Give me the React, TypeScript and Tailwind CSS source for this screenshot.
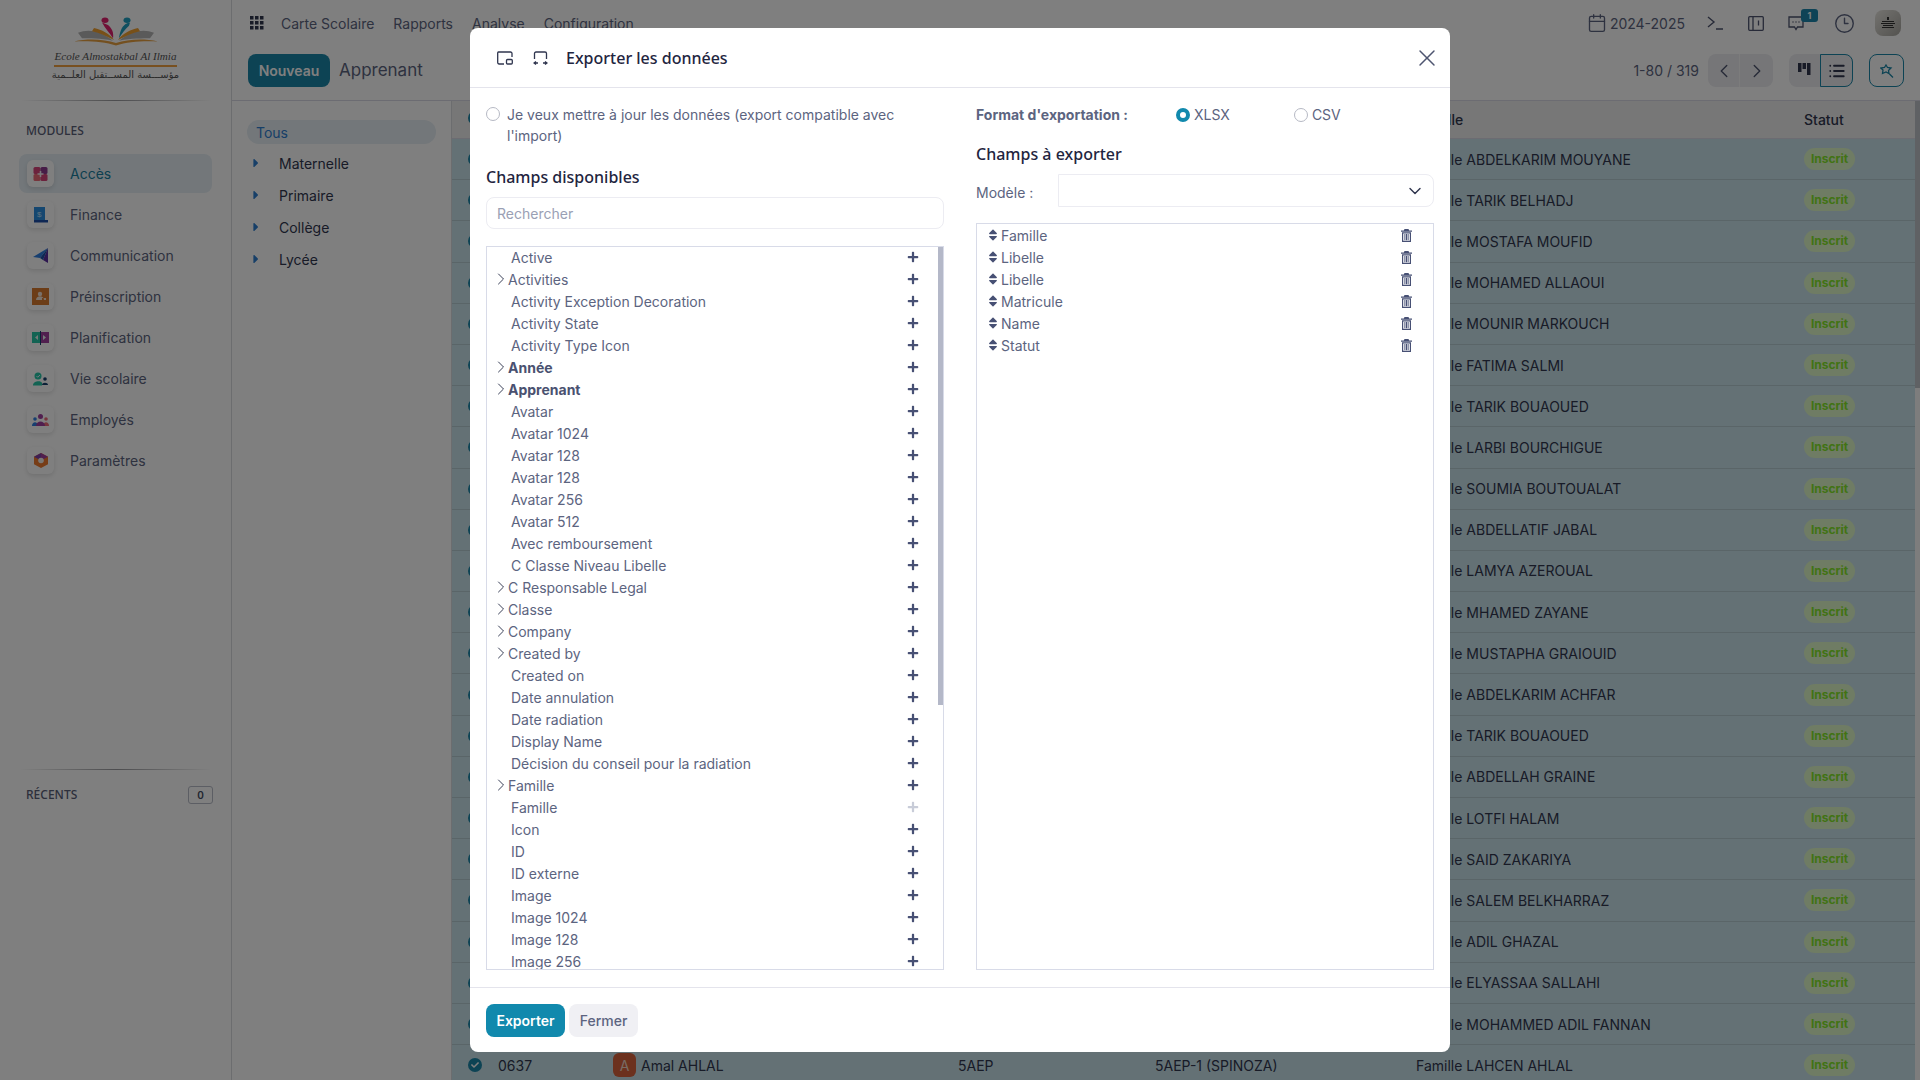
import { ChevronDown, ChevronLeft, ChevronRight, Clock3, X, List, Calendar } from "lucide-react";
import { FaPlus, FaSort, FaCaretRight, FaCheck } from "react-icons/fa";

const topMenu = ["Carte Scolaire", "Rapports", "Analyse", "Configuration"];
const levels = ["Maternelle", "Primaire", "Collège", "Lycée"];

const families = [
  "ABDELKARIM MOUYANE", "TARIK BELHADJ", "MOSTAFA MOUFID", "MOHAMED ALLAOUI", "MOUNIR MARKOUCH",
  "FATIMA SALMI", "TARIK BOUAOUED", "LARBI BOURCHIGUE", "SOUMIA BOUTOUALAT", "ABDELLATIF JABAL",
  "LAMYA AZEROUAL", "MHAMED ZAYANE", "MUSTAPHA GRAIOUID", "ABDELKARIM ACHFAR", "TARIK BOUAOUED",
  "ABDELLAH GRAINE", "LOTFI HALAM", "SAID ZAKARIYA", "SALEM BELKHARRAZ", "ADIL GHAZAL",
  "ELYASSAA SALLAHI", "MOHAMMED ADIL FANNAN", "LAHCEN AHLAL",
];

const fields: { label: string; expand?: boolean; bold?: boolean; muted?: boolean }[] = [
  { label: "Active" },
  { label: "Activities", expand: true },
  { label: "Activity Exception Decoration" },
  { label: "Activity State" },
  { label: "Activity Type Icon" },
  { label: "Année", expand: true, bold: true },
  { label: "Apprenant", expand: true, bold: true },
  { label: "Avatar" },
  { label: "Avatar 1024" },
  { label: "Avatar 128" },
  { label: "Avatar 128" },
  { label: "Avatar 256" },
  { label: "Avatar 512" },
  { label: "Avec remboursement" },
  { label: "C Classe Niveau Libelle" },
  { label: "C Responsable Legal", expand: true },
  { label: "Classe", expand: true },
  { label: "Company", expand: true },
  { label: "Created by", expand: true },
  { label: "Created on" },
  { label: "Date annulation" },
  { label: "Date radiation" },
  { label: "Display Name" },
  { label: "Décision du conseil pour la radiation" },
  { label: "Famille", expand: true },
  { label: "Famille", muted: true },
  { label: "Icon" },
  { label: "ID" },
  { label: "ID externe" },
  { label: "Image" },
  { label: "Image 1024" },
  { label: "Image 128" },
  { label: "Image 256" },
];

const exportFields = ["Famille", "Libelle", "Libelle", "Matricule", "Name", "Statut"];

// module icons from the sidebar, redrawn by hand
const moduleIcons = [
  <svg key="a" width="17" height="16" viewBox="0 0 16 16">
    <rect x="1" y="1" width="7" height="7" rx="1.5" fill="#d8447a" />
    <rect x="8" y="1" width="7" height="7" rx="1.5" fill="#8e3b8f" />
    <rect x="1" y="8" width="7" height="7" rx="1.5" fill="#ee6a78" />
    <rect x="8" y="8" width="7" height="7" rx="1.5" fill="#d8447a" />
    <path d="M8 5v6M5 8h6" stroke="#f6eef2" strokeWidth="1.6" />
  </svg>,
  <svg key="b" width="16" height="16" viewBox="0 0 16 16">
    <rect x="1" y="0" width="11" height="13" fill="#2a8fe0" />
    <path d="M1 13h14v2.5H1z" fill="#1d4fa8" />
    <text x="4" y="10" fontSize="8" fill="#bfe3ff" fontFamily="Liberation Sans, sans-serif">$</text>
  </svg>,
  <svg key="c" width="16" height="16" viewBox="0 0 16 16">
    <path d="M15 0v15l-5-3z" fill="#5a2ea0" />
    <path d="M15 0 0 9l7 1z" fill="#2f7fe0" />
    <path d="M15 0 7 10l3 2z" fill="#1d4fa8" />
  </svg>,
  <svg key="d" width="17" height="17" viewBox="0 0 17 17">
    <rect width="17" height="17" fill="#d97a2e" />
    <circle cx="8" cy="6" r="2.2" fill="#f4e4d4" />
    <path d="M4 12c0-5 8-5 8 0zM10 12h4v-2h-4z" fill="#f4e4d4" />
  </svg>,
  <svg key="e" width="17" height="14" viewBox="0 0 17 14">
    <rect y="1" width="8" height="11" fill="#26c6a6" />
    <rect x="9" y="1" width="8" height="11" fill="#a03f9f" />
    <rect x="8" y="0" width="1" height="14" fill="#17406f" />
    <path d="M6 4v5L3 6.500zM11 4v5l3-2.500z" fill="#e8f5f2" />
  </svg>,
  <svg key="f" width="15" height="14" viewBox="0 0 15 14">
    <circle cx="5" cy="4" r="3.500" fill="#26c6a6" />
    <path d="m3.500 4 1.200 1.200L7 3" stroke="#eef" strokeWidth="1" fill="none" />
    <path d="M0 13c0-4 8-5 9-2v2.500H0z" fill="#26c6a6" />
    <circle cx="12" cy="7" r="1.800" fill="#17406f" />
    <path d="M9 13c0-3 6-3 6 0z" fill="#17406f" />
  </svg>,
  <svg key="g" width="17" height="12" viewBox="0 0 17 12">
    <circle cx="8.500" cy="2.500" r="2.500" fill="#a03f9f" />
    <circle cx="3" cy="5" r="1.800" fill="#2f7fe0" />
    <circle cx="14" cy="5" r="1.800" fill="#ee6a78" />
    <path d="M0 12c0-5 6-5 6 0z" fill="#2f7fe0" />
    <path d="M11 12c0-5 6-5 6 0z" fill="#ee6a78" />
    <path d="M4 12c0-6 9-6 9 0z" fill="#a03f9f" />
  </svg>,
  <svg key="h" width="14" height="15" viewBox="0 0 14 15">
    <path d="M7 0l7 3.700v7.600L7 15l-7-3.700V3.700z" fill="#ee7a2e" />
    <path d="M7 0l7 3.700L7 7.500z" fill="#a03f9f" />
    <path d="M0 3.700 7 0v7.500z" fill="#7f3fa8" />
    <circle cx="7" cy="7.500" r="2.800" fill="#f5f0ea" />
  </svg>,
];

const modules = ["Accès", "Finance", "Communication", "Préinscription", "Planification", "Vie scolaire", "Employés", "Paramètres"];

function TrashIcon() {
  return (
    <svg width="11" height="13" viewBox="0 0 11 13" fill="#475074">
      <path d="M3.500 0h4l.7 1.500H11v1.200H0V1.500h2.800z" />
      <path d="M1 3.300h9V13H1zM2.200 4.500v7.300h6.600V4.500z" fillRule="evenodd" />
      <path d="M3.400 5h1v6.300h-1zM5 5h1v6.300H5zM6.600 5h1v6.300h-1z" />
    </svg>
  );
}

function Logo() {
  return (
    <div className="flex flex-col items-center">
      <svg width="84" height="30" viewBox="0 0 84 38" preserveAspectRatio="none">
        <path d="M4 20c10-5 22-3 35 10-12-3-25-3-31-3z" fill="#b4b4b4" />
        <path d="M80 20c-10-5-22-3-35 10 12-3 25-3 31-3z" fill="#b4b4b4" />
        <path d="M20 14c8 2 15 7 20 15-8-5-14-9-22-11zM64 14c-8 2-15 7-20 15 8-5 14-9 22-11z" fill="#f0a030" />
        <path d="M0 31c14-4 30-3 42 2 12-5 28-6 42-2-14-1-30 0-42 5-12-5-28-6-42-5z" fill="#e8a040" />
        <circle cx="31" cy="4" r="3.500" fill="#e0206f" />
        <path d="M28 7c3 8 8 13 11 20 1-7-1-13-5-17z" fill="#e0206f" />
        <circle cx="53" cy="4" r="3.500" fill="#1f9fc0" />
        <path d="M56 7c-4 1-9 3-11 20 3-6 6-12 10-16z" fill="#1f9fc0" />
      </svg>
      <div className="mt-[2px] h-[14px] whitespace-nowrap font-['Liberation_Serif',serif] text-[11.100px] leading-[14px] text-[#555] italic">
        Ecole Almostakbal Al Ilmia
      </div>
      <div className="mt-[2px] h-[2px] w-[123px] bg-[#f0a040]" />
      <div className="mt-[1px] h-[14px] whitespace-nowrap font-['DejaVu_Sans',sans-serif] text-[10px] leading-[14px] text-[#555]" dir="rtl">
        مؤســـسة المســتقبل العلــمية
      </div>
    </div>
  );
}

function Sidebar() {
  return (
    <aside className="flex h-full w-[232px] shrink-0 flex-col border-r border-[#d8dade] bg-white">
      <div className="flex h-[100px] flex-col items-center pt-[17px]">
        <Logo />
      </div>
      <div className="mx-[20px] h-px w-[192px] bg-gradient-to-r from-transparent via-[#9a9a9e] to-transparent" />
      <div className="mt-[21px] pl-[26px] font-['Noto_Sans',sans-serif] text-[12px] leading-[18px] font-medium text-[#5a6078]">MODULES</div>
      <nav className="mt-[13px] flex flex-col">
        {modules.map((m, i) => (
          <div
            key={m}
            className={`mx-[19px] flex items-center rounded-lg pl-[8px] ${i === 0 ? "my-px h-[39px] bg-[#e6eff5]" : "h-[41px]"}`}
          >
            <span className="flex h-[27px] w-[27px] items-center justify-center rounded-md bg-white shadow-[0_2px_5px_rgba(0,0,0,0.12)]">
              {moduleIcons[i]}
            </span>
            <span className={`ml-[16px] text-[14px] ${i === 0 ? "text-[#1a7f9f]" : "text-[#5c6480]"}`}>{m}</span>
          </div>
        ))}
      </nav>
      <div className="mx-[20px] mt-[288px] h-px w-[192px] bg-gradient-to-r from-transparent via-[#9a9a9e] to-transparent" />
      <div className="mt-[16px] flex items-center justify-between pr-[18px] pl-[26px]">
        <span className="font-['Noto_Sans',sans-serif] text-[12px] font-medium text-[#5a6078]">RÉCENTS</span>
        <span className="flex h-[18px] w-[25px] items-center justify-center rounded-[3px] border border-[#b8bcc8] text-[10px] font-semibold text-[#444a60]">0</span>
      </div>
    </aside>
  );
}

function TopBar() {
  return (
    <div className="flex h-[46px] items-center pr-[19px] pl-[18px]">
      <svg width="14" height="14" viewBox="0 0 14 14" fill="#30364f">
        {[0, 5, 10].map((y) => [0, 5, 10].map((x) => <rect key={`${x}-${y}`} x={x} y={y} width="3.500" height="3.500" />))}
      </svg>
      <div className="ml-[17px] flex gap-[19px] text-[14px] text-[#5c6480]">
        {topMenu.map((t) => (
          <span key={t}>{t}</span>
        ))}
      </div>
      <div className="ml-auto flex items-center text-[#5c6480]">
        <Calendar size={20} strokeWidth={1.6} />
        <span className="ml-[3px] text-[14px]">2024-2025</span>
        <svg className="ml-[22px]" width="16" height="14" viewBox="0 0 16 14" fill="none" stroke="#4e5570" strokeWidth="1.400">
          <path d="m1 1 6 5-6 5M9 13h7" />
        </svg>
        <svg className="ml-[25px]" width="16" height="15" viewBox="0 0 16 15" fill="none" stroke="#4e5570" strokeWidth="1.300">
          <rect x="0.700" y="0.700" width="14.600" height="13.600" rx="1" />
          <path d="M5 1v13M10.500 4.500v5" />
        </svg>
        <span className="relative ml-[24px]">
          <svg width="16" height="16" viewBox="0 0 16 16" fill="none" stroke="#4e5570" strokeWidth="1.300">
            <path d="M1 2h14v10H9.500L8 14.500 6.500 12H1z" />
            <path d="M4.500 7h1M7.500 7h1M10.500 7h1" />
          </svg>
          <span className="absolute top-[-6px] left-[13px] flex h-[13px] w-[17px] items-center justify-center rounded-[3px] bg-[#1c87ad] text-[9px] font-bold text-white">1</span>
        </span>
        <Clock3 className="ml-[30px]" size={21} strokeWidth={1.6} />
        <span className="ml-[20px] flex h-[26px] w-[26px] items-center justify-center rounded-lg bg-gradient-to-br from-[#e8e6e0] to-[#a8a6a0]">
          <svg width="16" height="13" viewBox="0 0 16 13" fill="#333">
            <path d="M7 0h2v3H7zM2 4h12v1H2zM1 6h14v1H1zM3 8h10v1H3zM2 10h12v1H2z" />
          </svg>
        </span>
      </div>
    </div>
  );
}

function ControlBar() {
  return (
    <div className="flex h-[55px] items-start border-b border-[#d8d8e4] pt-[8px] pr-[16px] pl-[16px]">
      <button className="flex h-[33px] w-[82px] items-center justify-center rounded-lg bg-[#1a86a8] text-[14px] font-semibold text-white">Nouveau</button>
      <span className="ml-[9px] text-[17px] leading-[32px] text-[#5c6480]">Apprenant</span>
      <div className="ml-auto flex items-center">
        <span className="text-[14px] text-[#5c6480]">1-80 / 319</span>
        <div className="ml-[9px] flex h-[33px] w-[65px] rounded-lg bg-[#ececf0] text-[#4e5570]">
          <span className="flex w-[32px] items-center justify-center border-r border-[#f8f8f8]"><ChevronLeft size={22} strokeWidth={1.5} /></span>
          <span className="flex w-[33px] items-center justify-center"><ChevronRight size={22} strokeWidth={1.5} /></span>
        </div>
        <div className="ml-[16px] flex h-[33px] w-[64px] rounded-lg bg-[#ececf0]">
          <span className="flex w-[31px] items-start justify-center pt-[9px]">
            <svg width="13" height="12" viewBox="0 0 13 12" fill="#30364f">
              <path d="M0 0h3.500v9H0zM4.500 0h3.500v6H4.500zM9 0h3.500v12H9z" />
            </svg>
          </span>
          <span className="flex w-[33px] items-center justify-center rounded-r-lg border border-[#1a86a8] text-[#30364f]"><List size={18} strokeWidth={2.400} /></span>
        </div>
        <span className="ml-[16px] flex h-[33px] w-[35px] items-center justify-center rounded-lg border border-[#1a86a8]">
          <svg width="14" height="14" viewBox="0 0 14 14" fill="none" stroke="#1a86a8" strokeWidth="1.300">
            <path d="M6 1 7.500 3.500 11 4 8.500 6.500 9 9.500 6 8 2.500 9.500 3 6 .7 4 4.500 3.500zM9.500 10l3.500 3.500" />
          </svg>
        </span>
      </div>
    </div>
  );
}

function Filters() {
  return (
    <div className="h-full w-[220px] shrink-0 border-r border-[#d8dade] bg-white pt-[19px] pl-[15px]">
      <div className="flex h-[24px] w-[189px] items-center rounded-xl bg-[#e6eef4] pl-[9px] text-[14px] text-[#2f7fd0]">Tous</div>
      <div className="mt-[3px] flex flex-col">
        {levels.map((l) => (
          <div key={l} className="flex h-[32px] items-center text-[14px] text-[#30364f]">
            <FaCaretRight className="ml-[2px] text-[#2f7fd0]" size={14} />
            <span className="ml-[16px]">{l}</span>
          </div>
        ))}
      </div>
    </div>
  );
}

function Table() {
  return (
    <div className="relative h-full flex-1 overflow-hidden bg-white text-[14px]">
      <div className="flex h-[38px] items-center border-b border-[#d8d8e4] bg-[#eeeeee] font-medium text-[#30364f]">
        <span className="w-[964px] pl-[16px]">
          <span className="inline-block h-[14px] w-[14px] rounded-full bg-[#1a86a8]" />
        </span>
        <span className="w-[388px]">Famille</span>
        <span>Statut</span>
      </div>
      {families.map((f, i) => (
        <div key={i} className="flex h-[41.200px] items-center border-b border-[#b4cad0] bg-[#c9e3ea] text-[#30364f]">
          <span className="flex w-[46px] shrink-0 pl-[16px]">
            <span className="flex h-[14px] w-[14px] items-center justify-center rounded-full bg-[#1a86a8] text-white"><FaCheck size={8} /></span>
          </span>
          <span className="w-[115px] shrink-0">{i === 22 ? "0637" : ""}</span>
          <span className="flex w-[345px] shrink-0 items-center">
            {i === 22 && (
              <>
                <span className="flex h-[24px] w-[23px] items-center justify-center rounded-md bg-[#d8623c] text-[14px] text-[#f0d8c8]">A</span>
                <span className="ml-[5px]">Amal AHLAL</span>
              </>
            )}
          </span>
          <span className="w-[197px] shrink-0">{i === 22 ? "5AEP" : ""}</span>
          <span className="w-[261px] shrink-0">{i === 22 ? "5AEP-1 (SPINOZA)" : ""}</span>
          <span className="w-[388px] shrink-0">Famille {f}</span>
          <span className="flex h-[22px] w-[51px] items-center justify-center rounded-full bg-[#dff8c8] text-[12px] font-bold text-[#82e628]">Inscrit</span>
        </div>
      ))}
      <div className="absolute top-0 right-0 h-full w-[5px] bg-[#fafafa]" />
      <div className="absolute top-0 right-0 h-[287px] w-[5px] bg-[#bfc2c8]" />
    </div>
  );
}

function ExportDialog() {
  return (
    <div className="absolute top-[28px] left-[470px] flex h-[1024px] w-[980px] flex-col rounded-lg bg-white text-[14px] text-[#5c6480]">
      <header className="flex h-[60px] shrink-0 items-center border-b border-[#e4e4ec] pr-[16px]">
        <svg className="ml-[27px]" width="16" height="14" viewBox="0 0 16 14" fill="none" stroke="#30364f" strokeWidth="1.300">
          <path d="M15 6V2.500A1.500 1.500 0 0 0 13.500 1h-12A1 1 0 0 0 .7 2v9.500A1.500 1.500 0 0 0 2 13h5" />
          <rect x="9.500" y="8.500" width="5.800" height="4.500" rx="1" />
        </svg>
        <svg className="ml-[20px]" width="15" height="14" viewBox="0 0 15 14" fill="none" stroke="#30364f" strokeWidth="1.300">
          <path d="M1.500 8V2.500a1.500 1.500 0 0 1 1.500-1.500h9a1.500 1.500 0 0 1 1.500 1.500V8M1 12h4M3 10.500 1 12l2 1.500M10 12h4M12 10.500l2 1.500-2 1.500" />
        </svg>
        <h4 className="ml-[18px] font-['Noto_Sans',sans-serif] text-[16px] font-medium text-[#1f2540]">Exporter les données</h4>
        <X className="mr-[-7px] ml-auto text-[#4e5570]" size={28} strokeWidth={1.250} />
      </header>

      <div className="grid min-h-0 flex-1 grid-cols-2 gap-8 px-4 pt-4">
        <div className="flex min-h-0 flex-col">
          <div className="flex h-[42px] items-start">
            <span className="mt-[3px] h-[14px] w-[14px] shrink-0 rounded-full border border-[#b6b9c4] bg-white" />
            <p className="ml-[7px] leading-[21px]">Je veux mettre à jour les données (export compatible avec l'import)</p>
          </div>
          <h5 className="mt-[19px] font-['Noto_Sans',sans-serif] text-[16px] leading-[24px] font-medium text-[#1f2540]">Champs disponibles</h5>
          <div className="mt-2 flex h-[32px] items-center rounded-lg border border-[#ececf2] pl-[10px] text-[#9aa0b4]">Rechercher</div>
          <div className="relative mt-[17px] h-[724px] overflow-hidden border border-[#d8dbe8]">
            <div className="mt-[-1px] flex flex-col">
              {fields.map((f, i) => (
                <div key={i} className="flex h-[22px] shrink-0 items-center pr-[24px]">
                  {f.expand ? (
                    <>
                      <ChevronRight className="ml-[4px] shrink-0 text-[#30364f]" size={20} strokeWidth={1.150} />
                      <span className={`ml-[-3px] ${f.bold ? "font-bold text-[#4a5170]" : ""}`}>{f.label}</span>
                    </>
                  ) : (
                    <span className="ml-[24px]">{f.label}</span>
                  )}
                  <FaPlus className={`ml-auto shrink-0 ${f.muted ? "text-[#c8ccd8]" : "text-[#475074]"}`} size={12} />
                </div>
              ))}
            </div>
            <div className="absolute top-0 right-0 h-[458px] w-[5px] bg-[#b4b8c8]" />
          </div>
        </div>

        <div className="flex min-h-0 flex-col">
          <div className="flex h-[21px] items-center">
            <span className="w-[200px] font-bold text-[#5c6480]">Format d'exportation :</span>
            <span className="h-[14px] w-[14px] rounded-full border-[4px] border-[#1189ad] bg-white" />
            <span className="ml-[4px]">XLSX</span>
            <span className="ml-[64px] h-[14px] w-[14px] rounded-full border border-[#b6b9c4]" />
            <span className="ml-[4px]">CSV</span>
          </div>
          <h5 className="mt-[17px] font-['Noto_Sans',sans-serif] text-[16px] leading-[24px] font-medium text-[#1f2540]">Champs à exporter</h5>
          <div className="mt-2 flex h-[33px] items-start">
            <span className="w-[82px] pt-[8px]">Modèle :</span>
            <div className="flex h-[33px] flex-1 items-center justify-end rounded-r-lg border border-[#ececf2] pr-[8px] text-[#30364f]">
              <ChevronDown size={20} strokeWidth={1.700} />
            </div>
          </div>
          <div className="mt-4 h-[747px] border border-[#d8dbe8]">
            {exportFields.map((f, i) => (
              <div key={i} className="flex h-[22px] items-center pr-[21px] pl-[9px]">
                <FaSort className="text-[#475074]" size={14} />
                <span className="ml-px">{f}</span>
                <span className="ml-auto"><TrashIcon /></span>
              </div>
            ))}
          </div>
        </div>
      </div>

      <footer className="mt-[17px] flex h-[65px] shrink-0 items-start gap-[4px] border-t border-[#e4e4ec] pt-[16px] pl-4">
        <button className="h-[33px] w-[79px] rounded-lg bg-[#1189ad] font-semibold text-white">Exporter</button>
        <button className="h-[33px] w-[69px] rounded-lg bg-[#f0f0f4] font-medium text-[#5c6480]">Fermer</button>
      </footer>
    </div>
  );
}

export default function App() {
  return (
    <div className="relative flex h-[1080px] w-[1920px] overflow-hidden bg-white font-['Inter',sans-serif]">
      <Sidebar />
      <main className="flex min-w-0 flex-1 flex-col">
        <TopBar />
        <ControlBar />
        <div className="flex min-h-0 flex-1">
          <Filters />
          <Table />
        </div>
      </main>
      <div className="absolute inset-0 bg-black/50" />
      <ExportDialog />
    </div>
  );
}
